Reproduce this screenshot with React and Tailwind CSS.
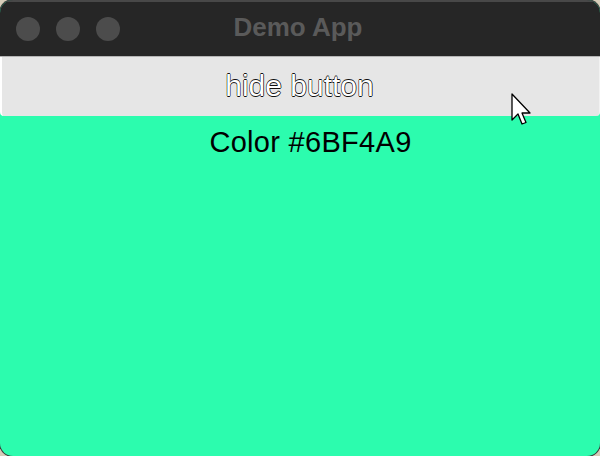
export default function App() {
  return (
    <div className="w-[600px] h-[456px] bg-[#d6cdb9]">
      <div className="relative w-full h-full rounded-[13px] overflow-hidden flex flex-col bg-[#2cfcae] shadow-[0_0_0_1px_#3a3a3a]">
        {/* title bar */}
        <div className="relative h-[56px] shrink-0 bg-[#262626] border-t-2 border-[#484848] flex items-center">
          <div className="flex gap-[16px] pl-[16px]">
            <div className="w-[24px] h-[24px] rounded-full bg-[#4c4c4c]" />
            <div className="w-[24px] h-[24px] rounded-full bg-[#4c4c4c]" />
            <div className="w-[24px] h-[24px] rounded-full bg-[#4c4c4c]" />
          </div>
          <div className="absolute inset-0 flex items-center justify-center">
            <span className="font-['Liberation_Sans',Arial,sans-serif] font-bold text-[26px] leading-none text-[#5a5a5a] -translate-x-[2px] -translate-y-[2px]">
              Demo App
            </span>
          </div>
        </div>
        <div className="h-[1px] bg-[#b5b5b5] shrink-0" />
        {/* button */}
        <div className="h-[59px] shrink-0 bg-[#e6e6e6] border-l-2 border-r border-l-white border-r-[#f2f2f2] rounded-b-[4px] flex items-center justify-center">
          <span className="font-['Liberation_Sans',Arial,sans-serif] text-[30px] leading-none text-white [text-shadow:0.6px_0_0_#111,-0.6px_0_0_#111,0_0.6px_0_#111,0_-0.6px_0_#111] -mt-[2px] -translate-x-[1px]">
            hide button
          </span>
        </div>
        {/* content */}
        <div className="flex-1 flex justify-center pt-[6px] pl-[21px]">
          <span className="font-['Liberation_Sans',Arial,sans-serif] text-[29px] leading-[40px] text-black tracking-[0.3px]">
            Color #6BF4A9
          </span>
        </div>
        {/* cursor */}
        <svg className="absolute left-[509px] top-[92px]" width="24" height="36" viewBox="0 0 24 36">
          <path d="M3 2 L3 28 L9 22 L13 32 L17 30.5 L13 21 L21 21 Z" fill="white" stroke="black" strokeWidth="1.3" strokeLinejoin="round" />
        </svg>
      </div>
    </div>
  );
}
